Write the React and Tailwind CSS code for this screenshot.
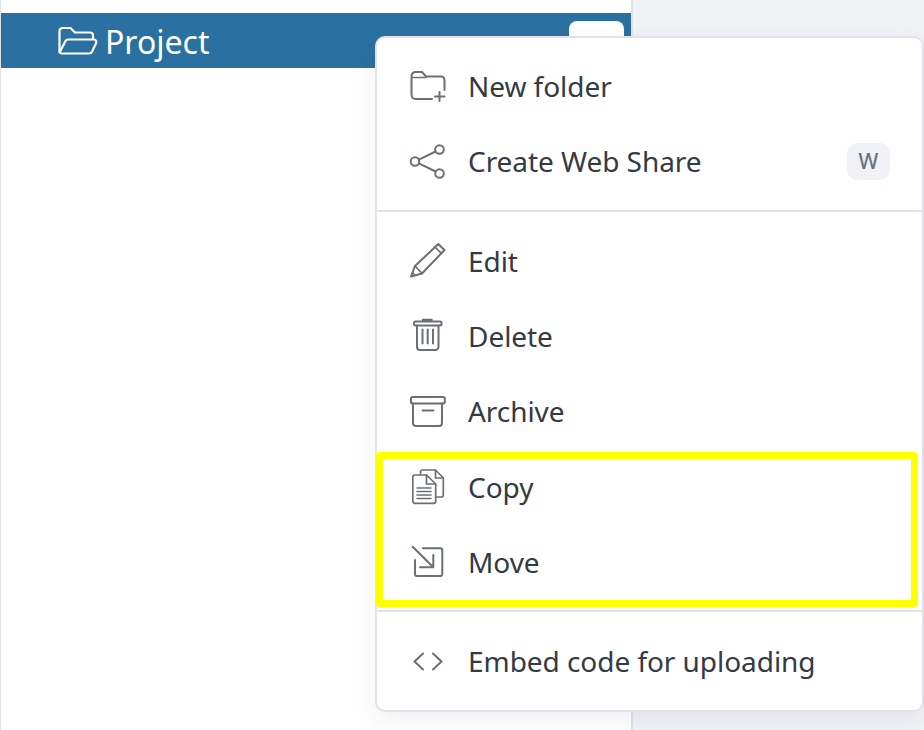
import React from 'react';

const FONT = "font-['Noto_Sans','Liberation_Sans',sans-serif]";

// Menu icons, all drawn on the same 36 box
const Icon = ({ children }) => (
  <svg className="w-9 h-9 shrink-0 overflow-visible text-[#6b6f76]" viewBox="0 0 36 36" fill="none" stroke="currentColor" strokeWidth="2" strokeLinecap="round" strokeLinejoin="round">
    {children}
  </svg>
);

const NewFolderIcon = () => (
  <Icon>
    <path d="M22 30H6a4.500 4.500 0 0 1-4.500-4.500V7A4 4 0 0 1 5.500 3h6.500l4 4.500h15a3.500 3.500 0 0 1 3.500 3.500v10" />
    <path d="M2 8.500h14" strokeWidth="1.500" />
    <path d="M29.500 23v9M25 27.500h9.500" />
  </Icon>
);

const ShareIcon = () => (
  <Icon>
    <circle cx="29.500" cy="5.500" r="4.300" />
    <circle cx="5" cy="17.500" r="4.300" />
    <circle cx="29.500" cy="29.500" r="4.300" />
    <path d="M25.600 7.500 8.900 15.600M8.900 19.400l16.700 8.100" />
  </Icon>
);

const PencilIcon = () => (
  <Icon>
    <path d="M1 32.500 5 22 28.300 0 34.500 6 12 29.500Z" />
    <path d="M5 22 12 29.500M25 3l6.300 6.300M2.500 28.500l2 2" strokeWidth="1.700" />
  </Icon>
);

const TrashIcon = () => (
  <Icon>
    <rect x="4" y="2.500" width="27.500" height="4" rx="1.500" />
    <path d="M13 1h8.500" strokeWidth="2.500" />
    <path d="M7 6.500V28a3 3 0 0 0 3 3h15.500a3 3 0 0 0 3-3V6.500" />
    <path d="M12.500 10.500v14M17.700 10.500v14M23 10.500v14" />
  </Icon>
);

const ArchiveIcon = () => (
  <Icon>
    <rect x="1" y="3" width="33.800" height="6.500" rx="1.500" />
    <path d="M3 9.500V29a3 3 0 0 0 3 3h23a3 3 0 0 0 3-3V9.500" />
    <path d="M12.500 16.500h11" />
  </Icon>
);

const CopyIcon = () => (
  <Icon>
    <path d="M10.500 4V2a2 2 0 0 1 2-2h13l7.800 8v17a2 2 0 0 1-2 2h-5.600" strokeWidth="1.700" />
    <path d="M25.500 0v8h7.800" strokeWidth="1.700" />
    <path d="M4.800 5h11.700l9.200 9v17.300a2 2 0 0 1-2 2H4.800a2 2 0 0 1-2-2V7a2 2 0 0 1 2-2Z" strokeWidth="1.700" />
    <path d="M16.500 5v9h9.200" strokeWidth="1.700" />
    <path d="M7 18h14M7 21.500h14M7 25h14M7 28.500h14" strokeWidth="1.500" />
  </Icon>
);

const MoveIcon = () => (
  <Icon>
    <path d="M13 3.300h17.300a2 2 0 0 1 2 2V29a2 2 0 0 1-2 2H7a2 2 0 0 1-2-2V15" />
    <path d="M2.700 1.700 23.300 22.300M23.300 10v12.300H10" />
  </Icon>
);

const CodeIcon = () => (
  <Icon>
    <path d="M13 9.500 4.500 17.500l8.500 8M23 9.500l8.500 8-8.500 8" />
  </Icon>
);

const MenuRow = ({ icon, label, shortcut }) => (
  <div className="flex items-center h-[75px] pl-[33px] pr-[32px]">
    {icon}
    <span className="ml-[22px] mb-[2px] text-[28px] tracking-[-0.05px] leading-none text-[#343a43]">{label}</span>
    {shortcut && (
      <span className="ml-auto w-[43px] h-[37px] flex items-center justify-center rounded-[10px] bg-[#f1f2f6] text-[21px] font-medium text-[#6b7280]">
        {shortcut}
      </span>
    )}
  </div>
);

export default function App() {
  return (
    <div className={`relative h-[730px] w-[924px] overflow-hidden bg-[#f1f2f6] ${FONT}`}>
      <div className="w-[633px] h-full bg-white border-l border-r-2 border-[#e0e1e8] pt-[13px]">
        <div className="relative flex items-center h-[55px] bg-[#2a70a1] pl-[57px] text-white">
          <svg className="w-10 h-7 shrink-0" viewBox="0 0 40 28" fill="none" stroke="currentColor" strokeWidth="2.200" strokeLinecap="round" strokeLinejoin="round">
            <path d="M1.500 24V4a3 3 0 0 1 3-3h8l4.500 4.500h15a3 3 0 0 1 3 3V12" />
            <path d="M1.500 25.500 7.500 14a3 3 0 0 1 2.500-1.500h26a2.500 2.500 0 0 1 2.300 3.300l-4.300 9a3 3 0 0 1-2.700 1.700H4a2.500 2.500 0 0 1-2.500-2.500" />
          </svg>
          <span className="ml-[7px] mt-[2px] text-[32px] leading-none">Project</span>
          <div className="absolute left-[568px] top-[8px] w-[55px] h-[40px] rounded-t-[8px] bg-white" />
        </div>
      </div>

      {/* Context menu */}
      <div className="absolute left-[375px] top-[36px] w-[549px] h-[676px] rounded-[10px] bg-white border-2 border-[#e2e3ea] shadow-[0_8px_24px_rgba(30,40,70,0.07)]">
        <div className="py-[11px] border-b-2 border-[#e2e3ea]">
          <MenuRow icon={<NewFolderIcon />} label="New folder" />
          <MenuRow icon={<ShareIcon />} label="Create Web Share" shortcut="W" />
        </div>
        <div className="pt-[12px] pb-[10px] border-b-2 border-[#e2e3ea]">
          <MenuRow icon={<PencilIcon />} label="Edit" />
          <MenuRow icon={<TrashIcon />} label="Delete" />
          <MenuRow icon={<ArchiveIcon />} label="Archive" />
          <div className="pt-px">
            <MenuRow icon={<CopyIcon />} label="Copy" />
            <MenuRow icon={<MoveIcon />} label="Move" />
          </div>
        </div>
        <div className="py-[12px]">
          <MenuRow icon={<CodeIcon />} label="Embed code for uploading" />
        </div>
      </div>

      {/* Yellow annotation over the menu */}
      <div className="absolute left-[376px] top-[452px] w-[542px] h-[155px] rounded-[4px] border-[7px] border-[#ffff00]" />
    </div>
  );
}
